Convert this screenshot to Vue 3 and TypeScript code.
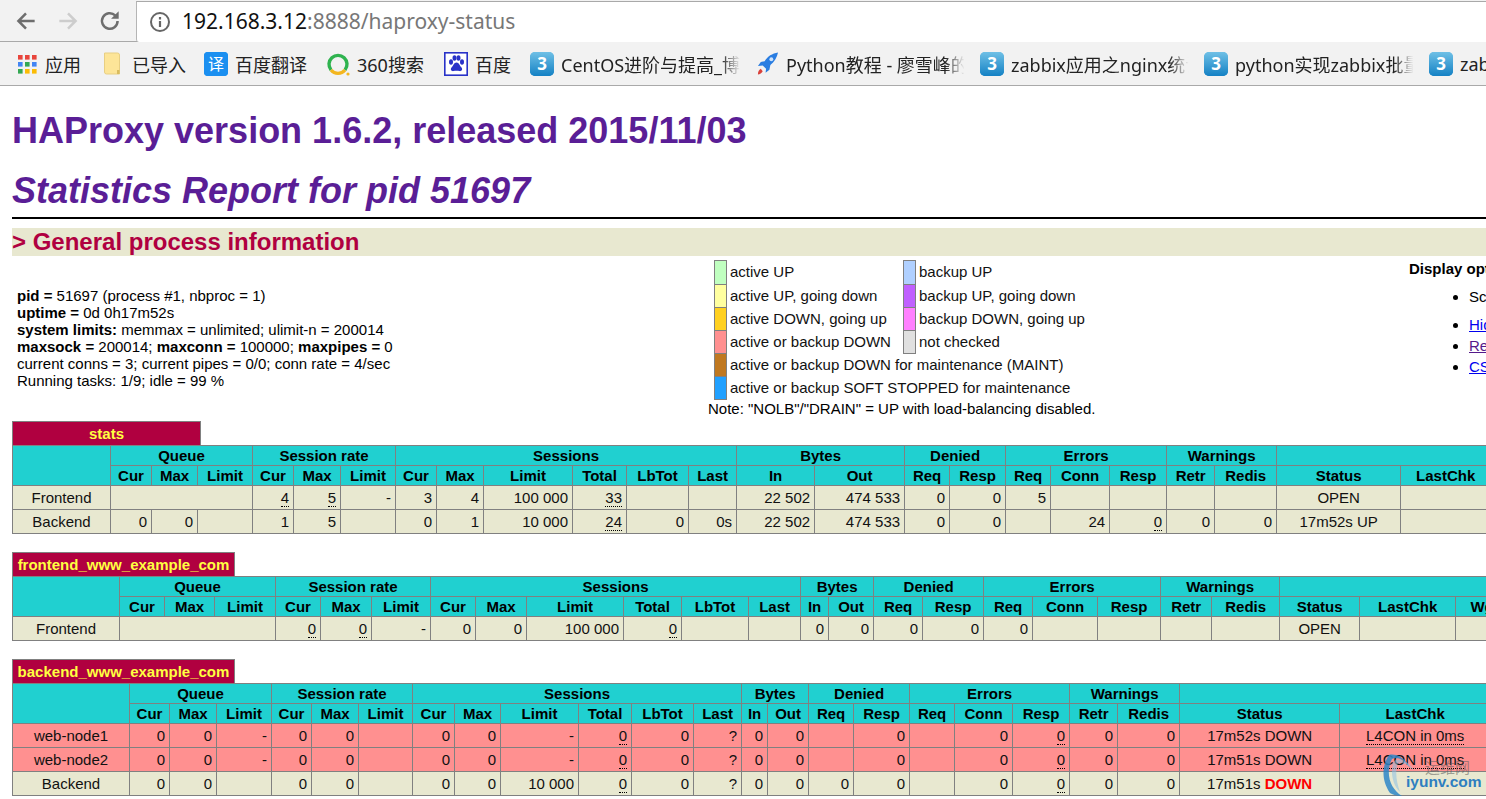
<script setup lang="ts">
type Cell = string | { t: string; span?: number; down?: boolean }
interface Row { kind: 'plain' | 'dead'; name: string; cells: Cell[] }
interface Proxy { title: string; titleWidth: number; edges: number[]; rows: Row[]; cls: string }

const groups = [
  { label: 'Queue', cols: ['Cur', 'Max', 'Limit'] },
  { label: 'Session rate', cols: ['Cur', 'Max', 'Limit'] },
  { label: 'Sessions', cols: ['Cur', 'Max', 'Limit', 'Total', 'LbTot', 'Last'] },
  { label: 'Bytes', cols: ['In', 'Out'] },
  { label: 'Denied', cols: ['Req', 'Resp'] },
  { label: 'Errors', cols: ['Req', 'Conn', 'Resp'] },
  { label: 'Warnings', cols: ['Retr', 'Redis'] },
  { label: '', cols: ['Status', 'LastChk', 'Wght'] },
]

// a trailing * means the value has the dotted tooltip underline
const proxies: Proxy[] = [
  {
    title: 'stats',
    cls: 'first',
    titleWidth: 189,
    edges: [12, 110, 151, 197, 252, 293, 340, 395, 436, 483, 572, 626, 688, 736, 814, 904, 949, 1005, 1050, 1109, 1166, 1214, 1276, 1400, 1490, 1550],
    rows: [
      { kind: 'plain', name: 'Frontend', cells: [{ t: '', span: 3 }, '4*', '5*', '-', '3', '4', '100 000', '33*', '', '', '22 502', '474 533', '0', '0', '5', '', '', '', '', 'OPEN', '', ''] },
      { kind: 'plain', name: 'Backend', cells: ['0', '0', '', '1', '5', '', '0', '1', '10 000', '24*', '0', '0s', '22 502', '474 533', '0', '0', '', '24', '0*', '0', '0', '17m52s UP', '', ''] },
    ],
  },
  {
    title: 'frontend_www_example_com',
    cls: 'second',
    titleWidth: 223,
    edges: [12, 119, 164, 214, 275, 320, 371, 430, 475, 526, 623, 681, 748, 800, 828, 873, 922, 983, 1032, 1097, 1160, 1211, 1279, 1359, 1455, 1522],
    rows: [
      { kind: 'plain', name: 'Frontend', cells: [{ t: '', span: 3 }, '0*', '0*', '-', '0', '0', '100 000', '0*', '', '', '0', '0', '0', '0', '0', '', '', '', '', 'OPEN', '', ''] },
    ],
  },
  {
    title: 'backend_www_example_com',
    cls: 'third',
    titleWidth: 223,
    edges: [12, 129, 169, 216, 271, 311, 358, 412, 454, 500, 578, 631, 693, 741, 767, 808, 853, 909, 954, 1012, 1069, 1117, 1179, 1339, 1490, 1550],
    rows: [
      { kind: 'dead', name: 'web-node1', cells: ['0', '0', '-', '0', '0', '', '0', '0', '-', '0*', '0', '?', '0', '0', '', '0', '', '0', '0*', '0', '0', '17m52s DOWN', 'L4CON in 0ms*', ''] },
      { kind: 'dead', name: 'web-node2', cells: ['0', '0', '-', '0', '0', '', '0', '0', '-', '0*', '0', '?', '0', '0', '', '0', '', '0', '0*', '0', '0', '17m51s DOWN', 'L4CON in 0ms*', ''] },
      { kind: 'plain', name: 'Backend', cells: ['0', '0', '', '0', '0', '', '0', '0', '10 000', '0*', '0', '?', '0', '0', '0', '0', '', '0', '0*', '0', '0', { t: '17m51s ', down: true }, '', ''] },
    ],
  },
]

const legend = [
  { color: '#c0ffc0', text: 'active UP', color2: '#b0d0ff', text2: 'backup UP' },
  { color: '#ffffa0', text: 'active UP, going down', color2: '#c060ff', text2: 'backup UP, going down' },
  { color: '#ffd020', text: 'active DOWN, going up', color2: '#ff80ff', text2: 'backup DOWN, going up' },
  { color: '#ff9090', text: 'active or backup DOWN', color2: '#e0e0e0', text2: 'not checked' },
  { color: '#c07820', text: 'active or backup DOWN for maintenance (MAINT)' },
  { color: '#20a0ff', text: 'active or backup SOFT STOPPED for maintenance' },
]

const bookmarks = [
  { icon: 'apps', text: '应用', width: 87 },
  { icon: 'folder', text: '已导入', width: 100 },
  { icon: 'fanyi', text: '百度翻译', width: 122 },
  { icon: 'q360', text: '360搜索', width: 118 },
  { icon: 'paw', text: '百度', width: 86 },
  { icon: 'three', text: 'CentOS进阶与提高_博客', width: 226, fade: true },
  { icon: 'rocket', text: 'Python教程 - 廖雪峰的官方', width: 224, fade: true },
  { icon: 'three', text: 'zabbix应用之nginx统计', width: 224, fade: true },
  { icon: 'three', text: 'python实现zabbix批量', width: 225, fade: true },
  { icon: 'three', text: 'zabbix', width: 60 },
]

const appDots = ['#e8453c', '#e8453c', '#e8453c', '#4285f4', '#34a853', '#4285f4', '#34a853', '#fbbc05', '#fbbc05']

function colWidths(edges: number[]) {
  return edges.slice(1).map((x, i) => x - edges[i])
}
function text(c: Cell) {
  const t = typeof c === 'string' ? c : c.t
  return t.endsWith('*') ? t.slice(0, -1) : t
}
function dotted(c: Cell) {
  return typeof c === 'string' && c.endsWith('*')
}
function span(c: Cell) {
  return typeof c === 'string' ? 1 : c.span ?? 1
}
function isDown(c: Cell) {
  return typeof c !== 'string' && !!c.down
}
// Status and LastChk are the last three cells of a row, all centred
function centred(cells: Cell[], i: number) {
  return i >= cells.length - 3
}
</script>

<template>
  <div class="page">
    <header class="chrome">
      <div class="toolbar">
        <svg class="nav" viewBox="0 0 24 24" width="26" height="26"><path d="M20 12H5M12 5l-7 7 7 7" fill="none" stroke="#6e6e6e" stroke-width="2.3" /></svg>
        <svg class="nav" viewBox="0 0 24 24" width="26" height="26"><path d="M4 12h15M12 5l7 7-7 7" fill="none" stroke="#cdcdcd" stroke-width="2.3" /></svg>
        <svg class="nav" viewBox="0 0 24 24" width="26" height="26"><path d="M19 12a7.2 7.2 0 1 1-2.200-5.200" fill="none" stroke="#6e6e6e" stroke-width="2.300" /><path d="M20 3v7h-7z" fill="#6e6e6e" /></svg>
        <div class="omnibox">
          <svg viewBox="0 0 22 22" width="22" height="22"><circle cx="11" cy="11" r="9" fill="none" stroke="#666" stroke-width="2" /><path d="M11 10v6M11 6v2.400" stroke="#666" stroke-width="2.200" /></svg>
          <span class="url"><span class="host">192.168.3.12</span>:8888/haproxy-status</span>
        </div>
      </div>
      <nav class="bookmarks">
        <div
          v-for="(b, i) in bookmarks"
          :key="i"
          class="bookmark"
          :style="{ width: b.width + 'px' }"
        >
          <span class="bm-icon" :class="b.icon">
            <svg v-if="b.icon === 'apps'" viewBox="0 0 20 20" width="20" height="20">
              <rect v-for="(c, d) in appDots" :key="d" :x="1 + (d % 3) * 7" :y="1 + Math.floor(d / 3) * 7" width="4.600" height="4.600" :fill="c" />
            </svg>
            <svg v-else-if="b.icon === 'folder'" viewBox="0 0 18 24" width="18" height="24">
              <path d="M.5 1h13a2 2 0 0 1 2 2v19h-13a2 2 0 0 1-2-2z" fill="#fde598" stroke="#e8cf83" />
              <path d="M13 22v-4h2.500v4z" fill="#d9bc5f" />
            </svg>
            <span v-else-if="b.icon === 'fanyi'" class="fanyi">译</span>
            <svg v-else-if="b.icon === 'q360'" viewBox="0 0 24 24" width="24" height="24">
              <path d="M5 18A9 9 0 1 1 19 18" fill="none" stroke="#2fb34f" stroke-width="3.400" />
              <path d="M5 18a9 9 0 0 0 14 0" fill="none" stroke="#f3b61f" stroke-width="3.400" />
              <circle cx="22" cy="22" r="1.600" fill="#f3b61f" />
            </svg>
            <svg v-else-if="b.icon === 'paw'" viewBox="0 0 24 24" width="24" height="24">
              <rect x="0.8" y="0.8" width="22.4" height="22.4" fill="#fff" stroke="#2932c8" stroke-width="1.600" />
              <ellipse cx="7" cy="10" rx="2" ry="2.800" fill="#2932c8" />
              <ellipse cx="10.500" cy="6" rx="2" ry="2.800" fill="#2932c8" />
              <ellipse cx="14.500" cy="6" rx="2" ry="2.800" fill="#2932c8" />
              <ellipse cx="18" cy="10" rx="2" ry="2.800" fill="#2932c8" />
              <path d="M12.500 10.500c-2.500 0-3 3-5 5-1.600 1.800 0 4 2 3.600 2-.5 4-.5 6 0 2 .4 3.600-1.800 2-3.600-2-2-2.500-5-5-5z" fill="#2932c8" />
            </svg>
            <svg v-else-if="b.icon === 'rocket'" viewBox="0 0 24 26" width="23" height="26">
              <path d="M23 1c-6 1-11 4-14 9l-4 1-3 4 5-.5 3.500 3.500-.5 4 4-3 1-5c4-3 7-8 8-13z" fill="#2a7de1" />
              <circle cx="16" cy="8" r="2" fill="#cfe3fa" />
              <path d="M5 18c-2 1-3 3-3 6 2-.5 4-1.500 5-3.500z" fill="#d9413b" />
            </svg>
            <span v-else class="three">3</span>
          </span>
          <span class="bm-text" :class="{ fade: b.fade }">{{ b.text }}</span>
        </div>
      </nav>
    </header>

    <main class="content">
      <h1>HAProxy version 1.6.2, released 2015/11/03</h1>
      <h2>Statistics Report for pid 51697</h2>
      <hr class="rule">
      <h3>&gt; General process information</h3>

      <section class="info">
        <div class="proc">
          <p><b>pid = </b>51697 (process #1, nbproc = 1)</p>
          <p><b>uptime = </b>0d 0h17m52s</p>
          <p><b>system limits:</b> memmax = unlimited; ulimit-n = 200014</p>
          <p><b>maxsock = </b>200014; <b>maxconn = </b>100000; <b>maxpipes = </b>0</p>
          <p>current conns = 3; current pipes = 0/0; conn rate = 4/sec</p>
          <p>Running tasks: 1/9; idle = 99 %</p>
        </div>
        <div class="legend">
          <div class="legend-grid">
            <template v-for="l in legend" :key="l.text">
              <span class="swatch" :style="{ background: l.color }"></span>
              <span class="legend-text" :class="{ wide: !l.text2 }">{{ l.text }}</span>
              <template v-if="l.text2">
                <span class="swatch" :style="{ background: l.color2 }"></span>
                <span class="legend-text">{{ l.text2 }}</span>
              </template>
            </template>
          </div>
          <p class="note">Note: "NOLB"/"DRAIN" = UP with load-balancing disabled.</p>
        </div>
        <div class="options">
          <b>Display option:</b>
          <ul>
            <li class="scope">Scope :</li>
            <li><a class="link" href="#">Hide 'DOWN' servers</a></li>
            <li><a class="link visited" href="#">Refresh now</a></li>
            <li><a class="link" href="#">CSV export</a></li>
          </ul>
        </div>
      </section>

      <section
        v-for="p in proxies"
        :key="p.title"
        class="proxy"
        :class="p.cls"
      >
        <div class="proxy-title" :style="{ width: p.titleWidth + 'px' }">{{ p.title }}</div>
        <table :style="{ width: p.edges[p.edges.length - 1] - p.edges[0] + 'px' }">
          <colgroup>
            <col v-for="(w, i) in colWidths(p.edges)" :key="i" :style="{ width: w + 'px' }">
          </colgroup>
          <thead>
            <tr>
              <th rowspan="2"></th>
              <th v-for="g in groups" :key="g.label" :colspan="g.cols.length">{{ g.label }}</th>
            </tr>
            <tr>
              <template v-for="g in groups" :key="g.label">
                <th v-for="c in g.cols" :key="c">{{ c }}</th>
              </template>
            </tr>
          </thead>
          <tbody>
            <tr v-for="r in p.rows" :key="r.name" :class="r.kind">
              <td class="name">{{ r.name }}</td>
              <td
                v-for="(c, i) in r.cells"
                :key="i"
                :colspan="span(c)"
                :class="{ mid: centred(r.cells, i) }"
              >
                <u v-if="dotted(c)">{{ text(c) }}</u>
                <template v-else>{{ text(c) }}</template>
                <b v-if="isDown(c)" class="down">DOWN</b>
              </td>
            </tr>
          </tbody>
        </table>
      </section>
    </main>

    <!-- site watermark stamped over the bottom right corner -->
    <div class="watermark">
      <svg viewBox="0 0 40 46" width="40" height="46">
        <path d="M29 17C24 6 14 2 8 4 2 13-1 27 9 42c3 2 7 3 12 3C9 38 4 22 11 8c7-3 13 2 18 9z" fill="#2e86c8" opacity="0.85" />
        <path d="M33 20C27 9 18 7 13 10 9 20 11 33 19 41 15 30 14 19 17 12c6-1 11 3 16 8z" fill="#8cc0e4" opacity="0.55" />
      </svg>
      <span class="wm-cn">运维网</span>
      <span class="wm-en">iyunv.com</span>
    </div>
  </div>
</template>

<style scoped>
.page {
  position: relative;
  height: 799px;
  overflow: hidden;
  background: #fff;
  color: #000;
  font-family: "Liberation Sans", Arial, "Noto Sans CJK SC", sans-serif;
  font-size: 15px;
}

.chrome {
  background: #f2f2f2;
  border-bottom: 1px solid #a9a9a9;
  height: 85px;
  box-sizing: content-box;
}

.toolbar {
  display: flex;
  align-items: center;
  height: 41px;
  padding-left: 13px;
  border-bottom: 1px solid #a9a9a9;
  box-sizing: content-box;
}

.nav {
  margin-right: 16px;
  flex: none;
}

.omnibox {
  flex: 1;
  height: 40px;
  margin-top: 1px;
  margin-left: -3px;
  display: flex;
  align-items: center;
  gap: 11px;
  padding-left: 12px;
  background: #fff;
  border-left: 1px solid #b5b5b5;
  border-top: 1px solid #a9a9a9;
  border-bottom-left-radius: 3px;
}

.url {
  margin-bottom: 2px;
  font-family: "Noto Sans", sans-serif;
  font-size: 21px;
  color: #777;
}

.host {
  color: #111;
}

.bookmarks {
  display: flex;
  align-items: center;
  height: 43px;
  padding-left: 17px;
  overflow: hidden;
  white-space: nowrap;
}

.bookmark {
  display: flex;
  align-items: center;
  flex: none;
  gap: 7px;
  font-family: "Noto Sans", "Noto Sans CJK SC", sans-serif;
  font-size: 18px;
  color: #222;
  overflow: hidden;
}

.bm-icon {
  flex: none;
  display: flex;
  align-items: center;
  width: 24px;
}

.bm-icon.apps,
.bm-icon.folder {
  width: 21px;
}

.bm-icon.rocket {
  width: 23px;
}

.bm-text {
  flex: 1;
  min-width: 0;
  overflow: hidden;
  padding-right: 20px;
}

.fade {
  -webkit-mask-image: linear-gradient(to right, #000 82%, transparent 92%);
  mask-image: linear-gradient(to right, #000 82%, transparent 92%);
}

.fanyi {
  width: 24px;
  height: 24px;
  border-radius: 4px;
  background: #1b8ff0;
  color: #fff;
  font-size: 16px;
  line-height: 24px;
  text-align: center;
}

.three {
  width: 24px;
  height: 24px;
  border-radius: 5px;
  background: linear-gradient(to bottom, #6fc0e6, #1481c4);
  color: #fff;
  font-size: 17px;
  font-weight: 700;
  line-height: 24px;
  text-align: center;
}

.content {
  padding-left: 12px;
}

h1,
h2 {
  margin: 0;
  color: #5a1e96;
  font-size: 36px;
  font-weight: 700;
  line-height: 40px;
  white-space: nowrap;
}

h1 {
  padding-top: 25px;
}

h2 {
  margin-top: 20px;
  font-style: italic;
}

.rule {
  margin: 6px 0 0;
  height: 2px;
  border: 0;
  background: #000;
}

h3 {
  margin: 9px 0 0;
  height: 28px;
  background: #e8e8d0;
  color: #b00040;
  font-size: 24px;
  font-weight: 700;
  line-height: 28px;
  white-space: nowrap;
}

.info {
  display: flex;
  height: 165px;
  white-space: nowrap;
}

.proc {
  width: 696px;
  flex: none;
  padding: 31px 0 0 5px;
  box-sizing: border-box;
}

.proc p {
  margin: 0;
  line-height: 17px;
}

.legend {
  width: 701px;
  flex: none;
  padding-top: 4px;
}

.legend-grid {
  display: grid;
  grid-template-columns: 13px 176px 13px 1fr;
  grid-template-rows: 24px repeat(5, 23px);
  margin-left: 6px;
}

.swatch {
  height: calc(100% + 1px);
  border: 1px solid #808080;
  box-sizing: border-box;
  width: 13px;
}

.legend-text {
  padding-left: 3px;
  line-height: 23px;
  color: #111;
}

.legend-text.wide {
  grid-column: span 3;
}

.note {
  margin: 1px 0 0;
  line-height: 17px;
}

.options {
  padding-top: 4px;
  line-height: 18px;
}

.options ul {
  margin: 8px 0 0;
  padding: 0 0 0 60px;
}

.options li {
  line-height: 21px;
}

.options .scope {
  margin-bottom: 7px;
}

.link {
  color: #0000ee;
}

.link.visited {
  color: #551a8b;
}

.proxy {
  margin-top: 18px;
}

.proxy.first {
  margin-top: 0;
}

.proxy-title {
  height: 25px;
  margin-bottom: -1px;
  border: 1px solid #808080;
  box-sizing: border-box;
  background: #b00040;
  color: #ffff40;
  font-weight: 700;
  line-height: 24px;
  text-align: center;
  white-space: nowrap;
}

table {
  table-layout: fixed;
  border-collapse: collapse;
  white-space: nowrap;
}

th,
td {
  border: 1px solid #808080;
  padding: 0 4px;
  overflow: visible;
}

th {
  height: 19px;
  line-height: 18px;
  background: #20d0d0;
  color: #000;
  font-weight: 700;
  text-align: center;
}

td {
  height: 23px;
  line-height: 22px;
  text-align: right;
  color: #111;
}

td.name,
td.mid {
  text-align: center;
}

.plain td {
  background: #e8e8d0;
}

.dead td {
  background: #ff9090;
}

u {
  text-decoration: none;
  border-bottom: 1px dotted #000;
}

.down {
  color: #ff0000;
}

.watermark {
  position: absolute;
  left: 1381px;
  top: 751px;
  width: 105px;
  height: 48px;
}

.watermark svg {
  position: absolute;
  left: 0;
  top: 0;
}

.wm-cn {
  position: absolute;
  left: 44px;
  top: 5px;
  color: rgba(90, 90, 90, 0.55);
  font-size: 15px;
  font-family: "Noto Sans CJK SC", sans-serif;
}

.wm-en {
  position: absolute;
  left: 25px;
  top: 22px;
  color: #2e7fc0;
  font-size: 15.5px;
  font-weight: 700;
}
</style>

<style>
html,
body {
  margin: 0;
  overflow: hidden;
}
</style>
